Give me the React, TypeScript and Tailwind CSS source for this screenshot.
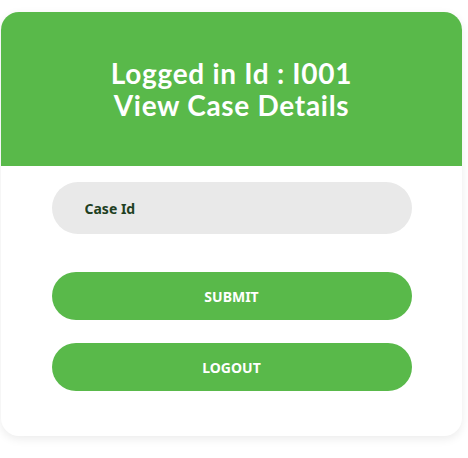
export default function App() {
  return (
    <div className="w-[468px] h-[458px] bg-white pt-[12px] pl-px">
      <div className="w-[461px] h-[424px] rounded-[18px] bg-white overflow-hidden flex flex-col shadow-[0_3px_10px_rgba(0,0,0,0.08)]">
        <div className="h-[154px] bg-[#59b94a] flex items-center justify-center">
          <h1 className="text-white text-center text-[28px] leading-[32px] font-bold font-['Lato',sans-serif] tracking-[0.7px]">
            Logged in Id : I001
            <br />
            View Case Details
          </h1>
        </div>
        <div className="flex flex-col items-center pt-[16px]">
          <input
            type="text"
            placeholder="Case Id"
            className="w-[360px] h-[52px] rounded-full bg-[#e9e9e9] pl-[33px] outline-none text-[14px] font-bold text-[#21401f] placeholder:text-[#21401f] font-['Noto_Sans',sans-serif]"
          />
          <button className="mt-[38px] w-[360px] h-[48px] rounded-full bg-[#59b94a] text-white text-[14px] font-bold font-['Noto_Sans',sans-serif]">
            SUBMIT
          </button>
          <button className="mt-[23px] w-[360px] h-[48px] rounded-full bg-[#59b94a] text-white text-[14px] font-bold font-['Noto_Sans',sans-serif]">
            LOGOUT
          </button>
        </div>
      </div>
    </div>
  )
}
